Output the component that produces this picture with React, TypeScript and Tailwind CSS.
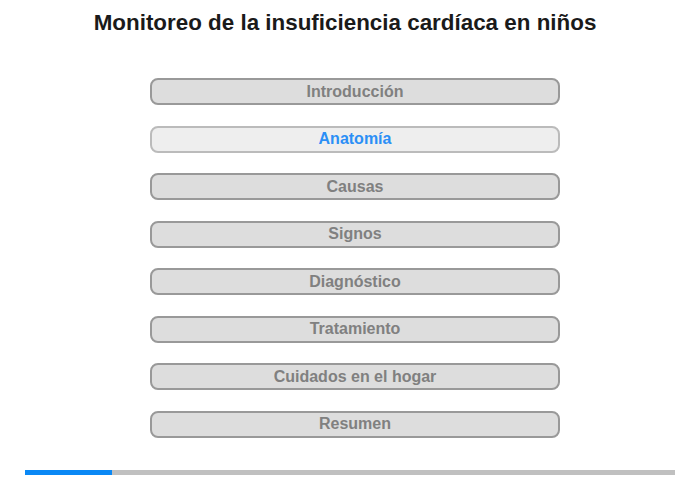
import React from 'react';

const sections = [
    'Introducción',
    'Anatomía',
    'Causas',
    'Signos',
    'Diagnóstico',
    'Tratamiento',
    'Cuidados en el hogar',
    'Resumen',
];

const active = 1;

export default function App() {
    return (
        <div className="w-[700px] h-[480px] bg-white relative" style={{ fontFamily: '"Liberation Sans", Arial, sans-serif' }}>
            <h1 className="pt-[9px] w-[690px] text-center text-[22.4px] leading-7 font-bold text-[#1a1a1a]">
                Monitoreo de la insuficiencia cardíaca en niños
            </h1>

            <div className="mt-[41px] ml-[150px] w-[410px] flex flex-col gap-[20.5px]">
                {sections.map((s, i) => {
                    const isActive = i === active;
                    return (
                        <div
                            key={s}
                            className={`h-[27px] rounded-[8px] border-2 flex items-center justify-center text-[16px] font-bold ${
                                isActive
                                    ? 'bg-[#eeeeee] border-[#bbbbbb] text-[#2b8ff6]'
                                    : 'bg-[#dddddd] border-[#999999] text-[#808080]'
                            }`}
                        >
                            {s}
                        </div>
                    );
                })}
            </div>

            <div className="absolute left-[25px] top-[470px] w-[650px] h-[5px] bg-[#c0c0c0]">
                <div className="h-full w-[87px] bg-[#0a88f5]" />
            </div>
        </div>
    );
}
